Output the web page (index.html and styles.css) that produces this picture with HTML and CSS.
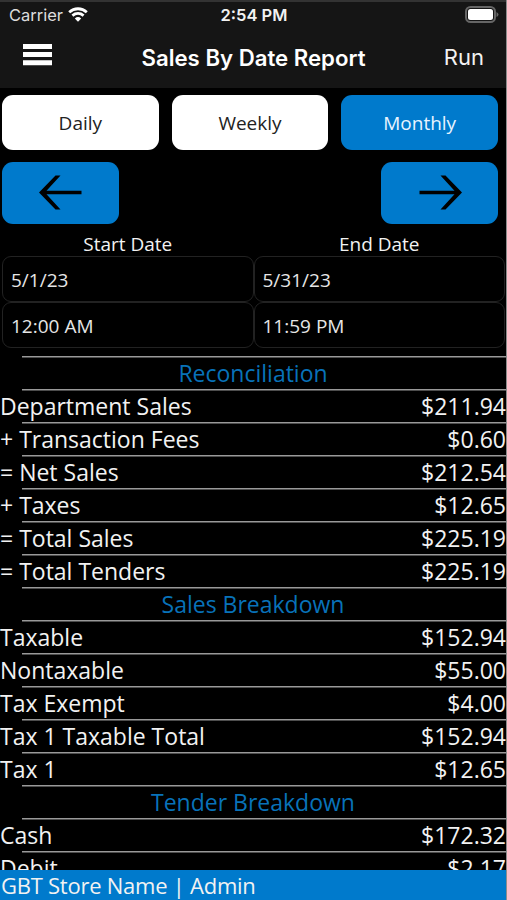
FILE: index.html
```html
<!DOCTYPE html>
<html lang="en">
	<head>
		<meta charset="utf-8">
		<title>Sales By Date Report</title>
		<link rel="stylesheet" href="styles.css">
	</head>
	<body>
		<header>
			<div class="status">
				<div class="carrier">
					<span>Carrier</span>
					<svg class="wifi" width="20" height="15" viewBox="0 0 20 15">
						<path d="M1.2 5.2C6.2.6 13.8.6 18.8 5.2" />
						<path d="M4.4 8.6C7.8 5.8 12.2 5.8 15.6 8.6" />
						<path class="dot" d="M6.8 11.4C8.8 9.6 11.2 9.6 13.2 11.4L10 14.8Z" />
					</svg>
				</div>
				<time>2:54 PM</time>
				<svg class="battery" width="34" height="17" viewBox="0 0 34 17">
					<rect class="shell" x="1" y="1" width="29" height="15" rx="4.5" />
					<rect class="charge" x="3" y="3" width="25" height="11" rx="2.5" />
					<path class="tip" d="M31.5 6v5q2-1 2-2.500t-2-2.500z" />
				</svg>
			</div>
			<nav>
				<button class="menu" aria-label="Menu">
					<svg width="29" height="22" viewBox="0 0 29 22">
						<path d="M0 2.600h29M0 10.600h29M0 18.800h29" />
					</svg>
				</button>
				<h1>Sales By Date Report</h1>
				<button class="run">Run</button>
			</nav>
		</header>
		<main>
			<section class="periods">
				<button>Daily</button>
				<button>Weekly</button>
				<button class="active">Monthly</button>
			</section>
			<section class="arrows">
				<button aria-label="Previous">
					<svg width="44" height="36" viewBox="0 0 44 36">
						<path d="M16.500.5h5L7.500 15.800h35v3.400h-35L21.500 34.500h-5L0 17.500z" />
					</svg>
				</button>
				<button aria-label="Next">
					<svg width="44" height="36" viewBox="0 0 44 36">
						<path d="M27.500.5h-5l14 15.300h-35v3.400h35l-14 15.300h5L44 17.500z" />
					</svg>
				</button>
			</section>
			<section class="dates">
				<div>
					<label for="start_date">Start Date</label>
					<input id="start_date" type="text" value="5/1/23">
					<input id="start_time" type="text" value="12:00 AM">
				</div>
				<div>
					<label for="end_date">End Date</label>
					<input id="end_date" type="text" value="5/31/23">
					<input id="end_time" type="text" value="11:59 PM">
				</div>
			</section>
			<ul class="report">
				<li class="heading">Reconciliation</li>
				<li><span>Department Sales</span><var>$211.94</var></li>
				<li><span>+ Transaction Fees</span><var>$0.60</var></li>
				<li><span>= Net Sales</span><var>$212.54</var></li>
				<li><span>+ Taxes</span><var>$12.65</var></li>
				<li><span>= Total Sales</span><var>$225.19</var></li>
				<li><span>= Total Tenders</span><var>$225.19</var></li>
				<li class="heading">Sales Breakdown</li>
				<li><span>Taxable</span><var>$152.94</var></li>
				<li><span>Nontaxable</span><var>$55.00</var></li>
				<li><span>Tax Exempt</span><var>$4.00</var></li>
				<li><span>Tax 1 Taxable Total</span><var>$152.94</var></li>
				<li><span>Tax 1</span><var>$12.65</var></li>
				<li class="heading">Tender Breakdown</li>
				<li><span>Cash</span><var>$172.32</var></li>
				<li><span>Debit</span><var>$2.17</var></li>
			</ul>
		</main>
		<footer>GBT Store Name | Admin</footer>
	</body>
</html>
```
FILE: styles.css
```css
*{ box-sizing: border-box; }
body{ display: flex; flex-flow: column; height: 900px; margin: 0; overflow: hidden; border-right: 1px solid #8c8c8c; background: #000; color: #f2f2f2; font-family: "Open Sans", "Noto Sans", sans-serif; }
button{ border: 0; padding: 0; font: inherit; color: inherit; background: none; }

header{ flex: none; height: 88px; border-top: 2px solid #333; background: #151515; font-family: Inter, sans-serif; }
.status{ display: grid; grid-template-columns: 1fr auto 1fr; align-items: center; height: 26px; padding: 0 7px 0 9px; font-size: 16.500px; }
.carrier{ display: flex; align-items: center; gap: 5px; color: #ddd; }
.wifi{ margin-top: -1px; fill: none; stroke: #fff; stroke-width: 2.8; }
.wifi .dot{ fill: #fff; stroke: none; }
.status time{ font-weight: 600; }
.battery{ justify-self: end; margin-top: -2px; }
.battery .shell{ fill: #151515; stroke: #666; stroke-width: 2; }
.battery .charge{ fill: #fff; }
.battery .tip{ fill: #666; }

nav{ display: grid; grid-template-columns: 1fr auto 1fr; align-items: center; height: 58px; padding: 0 22px 0 23px; }
.menu{ justify-self: start; height: 22px; margin-top: -4px; }
.menu svg{ display: block; stroke: #fff; stroke-width: 5; }
h1{ margin: 0; font-size: 22.200px; font-weight: 600; color: #fff; }
.run{ justify-self: end; font-size: 22px; }

main{ flex: 1; min-height: 0; overflow: hidden; }
.periods{ display: flex; gap: 13px; padding: 7px 8px 0 2px; }
.periods button{ flex: 1; height: 55px; border-radius: 11px; background: #fff; color: #222; font-size: 19px; }
.periods .active{ background: #007acc; color: #e8f4ff; }
.arrows{ display: flex; justify-content: space-between; padding: 12px 8px 0 2px; }
.arrows button{ display: flex; align-items: center; justify-content: center; width: 117px; height: 62px; border-radius: 11px; background: #007acc; }
.arrows svg{ fill: #000; }

.dates{ display: flex; padding: 8px 1px 0 2px; font-size: 19px; }
.dates div{ display: flex; flex-flow: column; flex: 1; }
.dates label{ height: 24px; line-height: 24px; text-align: center; }
.dates input{ width: 100%; height: 46px; padding: 2px 9px 0 8px; border: 1px solid #222; border-radius: 9px; background: #000; color: #e6e6e6; font: inherit; }

.report{ margin: 8px 0 0; padding: 0; list-style: none; font-size: 23px; }
.report li{ display: flex; justify-content: space-between; height: 33px; line-height: 35px; background: linear-gradient(#999, #999) 22px 0 / 100% 1.500px no-repeat; }
.report var{ font-style: normal; }
.report .heading{ justify-content: center; color: #0872b9; }

footer{ flex: none; height: 30px; padding-left: 1px; line-height: 30px; background: #007acc; font-size: 22px; letter-spacing: -.250px; }
```
